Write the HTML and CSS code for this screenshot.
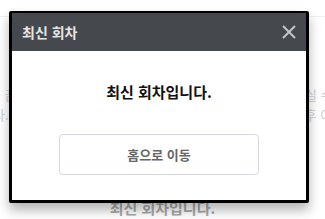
FILE: index.html
```html
<!doctype html>
<html lang="ko">
<head>
    <meta charset="UTF-8">
    <title>최신 회차</title>
    <meta name="viewport" content="width=device-width">
    <link rel="stylesheet" href="styles.css">
</head>
<body>

    <div id="page">
        <div class="topbar"></div>
        <div class="lines">
            <p>작품을 끝까지 감상하셨습니다. 다음 회차는 업데이트 후 이용하실 수 있기</p>
            <p>니다. 금주 연재분은 매주 정해진 요일에 공개되며 알림 설정 후 이용</p>
        </div>
        <p class="under">최신 회차입니다.</p>
    </div>

    <div class="dim">
        <div class="modal">
            <div class="modal-head">
                <h2>최신 회차</h2>
                <button class="close" type="button" aria-label="닫기">
                    <svg width="14" height="14" viewBox="0 0 14 14">
                        <path d="M1 1 L13 13 M13 1 L1 13" stroke="#c3c6c9" stroke-width="2" fill="none"/>
                    </svg>
                </button>
            </div>
            <div class="modal-body">
                <p class="msg">최신 회차입니다.</p>
                <button class="btn" type="button">홈으로 이동</button>
            </div>
        </div>
    </div>

</body>
</html>
```

FILE: styles.css
```css
body {
    margin: 0;
    background-color: #fff;
    font-family: "Noto Sans CJK KR", "Noto Sans", sans-serif;
    overflow: hidden;
}

#page {
    height: 219px;
    overflow: hidden;
}

.topbar {
    height: 16px;
    border-bottom: 1px solid #f0f0f0;
}

.lines {
    margin-top: 68px;
    text-align: center;
}

.lines p {
    margin: 0;
    font-size: 13px;
    line-height: 20px;
    color: #cfcfd8;
    white-space: nowrap;
    margin-left: -40px;
    margin-right: -40px;
}

.under {
    margin: 72px 0 0;
    text-align: center;
    font-size: 15px;
    font-weight: 700;
    line-height: 22px;
    color: #a8a8a8;
}

.modal {
    position: absolute;
    left: 9px;
    top: 11px;
    width: 300px;
    height: 192px;
    box-sizing: border-box;
    border: 3px solid #000;
    border-top-width: 2px;
    border-radius: 2px;
    background-color: #fff;
    box-shadow: 0 7px 12px rgba(0, 0, 0, 0.3);
}

.modal-head {
    height: 38px;
    display: flex;
    align-items: center;
    justify-content: space-between;
    padding: 0 10px 0 10px;
    background-color: #45494e;
}

.modal-head h2 {
    margin: 0;
    font-size: 14px;
    font-weight: 700;
    color: #e6e6e6;
}

.close {
    border: 0;
    padding: 0;
    background: none;
    display: flex;
}

.modal-body {
    display: flex;
    flex-direction: column;
    align-items: center;
    padding-top: 30px;
}

.msg {
    margin: 0;
    font-size: 15px;
    font-weight: 700;
    line-height: 22px;
    color: #111;
}

.btn {
    margin-top: 31px;
    width: 200px;
    height: 41px;
    border: 1px solid #d5d8dd;
    border-radius: 4px;
    background-color: #fff;
    font-family: inherit;
    font-size: 13px;
    font-weight: 700;
    color: #666;
}
```
